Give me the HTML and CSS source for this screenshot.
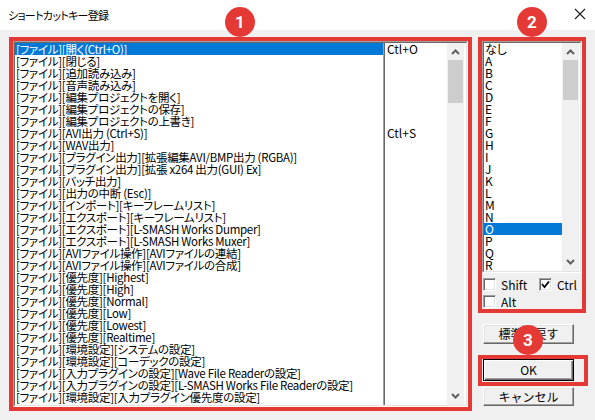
FILE: index.html
```html
<!DOCTYPE html>
<html lang="ja">
<head>
<meta charset="utf-8">
<title>ショートカットキー登録</title>
<link rel="stylesheet" href="styles.css">
</head>
<body>
<div class="window">
  <div class="titlebar">
    <span class="title">ショートカットキー登録</span>
    <svg class="close" width="12" height="12" viewBox="0 0 12 12"><path d="M1 1 L11 11 M11 1 L1 11" stroke="#1a1a1a" stroke-width="1.1" fill="none"/></svg>
  </div>
  <div class="content">
    <div class="box box-main">
      <div class="listbox">
        <div class="listbox-in main-list">
          <div class="col-names">
            <div class="row sel">[ファイル][開く(Ctrl+O)]</div>
            <div class="row">[ファイル][閉じる]</div>
            <div class="row">[ファイル][追加読み込み]</div>
            <div class="row">[ファイル][音声読み込み]</div>
            <div class="row">[ファイル][編集プロジェクトを開く]</div>
            <div class="row">[ファイル][編集プロジェクトの保存]</div>
            <div class="row">[ファイル][編集プロジェクトの上書き]</div>
            <div class="row">[ファイル][AVI出力 (Ctrl+S)]</div>
            <div class="row">[ファイル][WAV出力]</div>
            <div class="row">[ファイル][プラグイン出力][拡張編集AVI/BMP出力 (RGBA)]</div>
            <div class="row">[ファイル][プラグイン出力][拡張 x264 出力(GUI) Ex]</div>
            <div class="row">[ファイル][バッチ出力]</div>
            <div class="row">[ファイル][出力の中断 (Esc)]</div>
            <div class="row">[ファイル][インポート][キーフレームリスト]</div>
            <div class="row">[ファイル][エクスポート][キーフレームリスト]</div>
            <div class="row">[ファイル][エクスポート][L-SMASH Works Dumper]</div>
            <div class="row">[ファイル][エクスポート][L-SMASH Works Muxer]</div>
            <div class="row">[ファイル][AVIファイル操作][AVIファイルの連結]</div>
            <div class="row">[ファイル][AVIファイル操作][AVIファイルの合成]</div>
            <div class="row">[ファイル][優先度][Highest]</div>
            <div class="row">[ファイル][優先度][High]</div>
            <div class="row">[ファイル][優先度][Normal]</div>
            <div class="row">[ファイル][優先度][Low]</div>
            <div class="row">[ファイル][優先度][Lowest]</div>
            <div class="row">[ファイル][優先度][Realtime]</div>
            <div class="row">[ファイル][環境設定][システムの設定]</div>
            <div class="row">[ファイル][環境設定][コーデックの設定]</div>
            <div class="row">[ファイル][入力プラグインの設定][Wave File Readerの設定]</div>
            <div class="row">[ファイル][入力プラグインの設定][L-SMASH Works File Readerの設定]</div>
            <div class="row">[ファイル][環境設定][入力プラグイン優先度の設定]</div>
          </div>
          <div class="col-keys">
            <div class="row">Ctl+O</div>
            <div class="row"></div>
            <div class="row"></div>
            <div class="row"></div>
            <div class="row"></div>
            <div class="row"></div>
            <div class="row"></div>
            <div class="row">Ctl+S</div>
          </div>
          <div class="scrollbar">
            <svg class="arrow" width="9" height="6" viewBox="0 0 9 6"><polyline points="1,5 4.5,1.5 8,5" fill="none" stroke="#606060" stroke-width="2"/></svg>
            <div class="thumb thumb-main"></div>
            <div class="spacer"></div>
            <svg class="arrow" width="9" height="6" viewBox="0 0 9 6"><polyline points="1,1 4.5,4.5 8,1" fill="none" stroke="#606060" stroke-width="2"/></svg>
          </div>
        </div>
      </div>
    </div>

    <div class="side">
      <div class="box box-keys">
        <div class="listbox">
          <div class="listbox-in key-list">
            <div class="col-letters">
              <div class="row">なし</div>
              <div class="row">A</div>
              <div class="row">B</div>
              <div class="row">C</div>
              <div class="row">D</div>
              <div class="row">E</div>
              <div class="row">F</div>
              <div class="row">G</div>
              <div class="row">H</div>
              <div class="row">I</div>
              <div class="row">J</div>
              <div class="row">K</div>
              <div class="row">L</div>
              <div class="row">M</div>
              <div class="row">N</div>
              <div class="row sel">O</div>
              <div class="row">P</div>
              <div class="row">Q</div>
              <div class="row">R</div>
            </div>
            <div class="scrollbar">
              <svg class="arrow" width="9" height="6" viewBox="0 0 9 6"><polyline points="1,5 4.5,1.5 8,5" fill="none" stroke="#606060" stroke-width="2"/></svg>
              <div class="thumb thumb-keys"></div>
              <div class="spacer"></div>
              <svg class="arrow" width="9" height="6" viewBox="0 0 9 6"><polyline points="1,1 4.5,4.5 8,1" fill="none" stroke="#606060" stroke-width="2"/></svg>
            </div>
          </div>
        </div>
        <div class="mods">
          <div class="mod-row">
            <label class="check check-shift"><span class="cbox"></span><span>Shift</span></label>
            <label class="check"><span class="cbox checked"><svg width="9" height="9" viewBox="0 0 9 9"><polyline points="1,4 3.5,7 8,1.5" fill="none" stroke="#000" stroke-width="1.8"/></svg></span><span>Ctrl</span></label>
          </div>
          <div class="mod-row">
            <label class="check"><span class="cbox"></span><span>Alt</span></label>
          </div>
        </div>
      </div>
      <div class="btn btn-reset">標準に戻す</div>
      <div class="box box-ok">
        <div class="btn btn-default">OK</div>
      </div>
      <div class="btn btn-cancel">キャンセル</div>
    </div>
  </div>

  <div class="badge badge-1">1</div>
  <div class="badge badge-2">2</div>
  <div class="badge badge-3">3</div>
</div>
</body>
</html>
```

FILE: styles.css
```css
* { box-sizing: border-box; }
html, body { margin: 0; padding: 0; }
body {
  width: 595px;
  height: 420px;
  overflow: hidden;
  background: #f0f0f0;
  font-family: "Noto Sans CJK JP", "Noto Sans", sans-serif;
  font-size: 12px;
  color: #000;
}
.window {
  position: relative;
  width: 595px;
  height: 420px;
  background: #f0f0f0;
}
.titlebar {
  height: 30px;
  background: #fff;
  display: flex;
  align-items: center;
  justify-content: space-between;
  padding: 0 9px 1px 8px;
}
.title {
  font-size: 11px;
  letter-spacing: -0.7px;
  font-feature-settings: "palt";
  color: #000;
}
.close { display: block; margin-top: -2px; }

.content {
  display: flex;
  padding: 7px 0 0 9px;
  gap: 6px;
}
.box {
  border: 4px solid #e53935;
}
.box-main {
  width: 463px;
  height: 374px;
}
.listbox {
  border: 1px solid;
  border-color: #a0a0a0 #ffffff #ffffff #a0a0a0;
  background: #fff;
}
.listbox-in {
  border: 1px solid;
  border-color: #696969 #e3e3e3 #e3e3e3 #696969;
  display: flex;
  background: #fff;
  overflow: hidden;
}
.box-main .listbox { height: 366px; }
.main-list { height: 364px; }

.row {
  height: 12px;
  line-height: 12px;
  white-space: nowrap;
  font-size: 11.5px;
  letter-spacing: -0.3px;
  font-feature-settings: "palt";
  padding-left: 1px;
}
.row.sel {
  background: #0078d7;
  color: #fff;
}
.col-names {
  width: 368px;
  flex: none;
  position: relative;
  z-index: 1;
}
.col-keys {
  width: 64px;
  flex: none;
  border-left: 1px solid #a0a0a0;
  box-shadow: inset 1px 0 0 #696969;
  padding-left: 2px;
  background: #fff;
  position: relative;
  z-index: 2;
}
.col-keys .row { letter-spacing: 0; font-size: 12px; }
.scrollbar {
  width: 17px;
  flex: none;
  background: #f0f0f0;
  display: flex;
  flex-direction: column;
  align-items: center;
  position: relative;
  z-index: 2;
}
.scrollbar .arrow {
  display: block;
  margin: 6px 0 5px;
}
.scrollbar .arrow:last-child { margin: 5px 0 6px; }
.thumb {
  width: 15px;
  background: #cdcdcd;
  flex: none;
}
.thumb-main { height: 43px; }
.thumb-keys { height: 40px; }
.spacer { flex: 1; }

.side {
  display: flex;
  flex-direction: column;
  width: 110px;
}
.box-keys {
  width: 108px;
  height: 276px;
}
.box-keys .listbox { width: 100px; height: 232px; }
.key-list { height: 230px; }
.col-letters { width: 78px; flex: none; }
.col-letters .row { font-size: 12px; letter-spacing: 0; }

.mods {
  padding: 5px 0 0 1px;
}
.mod-row {
  display: flex;
  height: 13px;
  margin-bottom: 4px;
}
.check {
  display: flex;
  align-items: center;
  gap: 5px;
  font-size: 12px;
  line-height: 13px;
}
.check-shift { width: 56px; }
.cbox {
  width: 13px;
  height: 13px;
  background: #fff;
  border: 1px solid;
  border-color: #a0a0a0 #fff #fff #a0a0a0;
  box-shadow: inset 1px 1px 0 #696969, inset -1px -1px 0 #e3e3e3;
  display: flex;
  align-items: center;
  justify-content: center;
  flex: none;
}
.cbox svg { display: block; }

.btn {
  width: 91px;
  height: 20px;
  margin-left: 5px;
  background: #f0f0f0;
  border: 1px solid;
  border-color: #fff #696969 #696969 #fff;
  box-shadow: inset -1px -1px 0 #a0a0a0, inset 1px 1px 0 #e3e3e3;
  display: flex;
  align-items: center;
  justify-content: center;
  font-size: 12px;
  line-height: 12px;
}
.btn-reset { margin-top: 11px; }
.box-ok {
  width: 110px;
  height: 31px;
  margin-top: 11px;
  padding: 0;
}
.btn-default {
  margin: 0 0 0 1px;
  height: 22px;
  border: 1px solid #000;
  box-shadow: inset 1px 1px 0 #fff, inset -1px -1px 0 #696969, inset -2px -2px 0 #a0a0a0;
}
.btn-cancel {
  margin-top: 1px;
  height: 19px;
}

.badge {
  position: absolute;
  width: 30px;
  height: 30px;
  border-radius: 50%;
  background: #e53935;
  color: #fff;
  font-family: "Roboto", "Liberation Sans", sans-serif;
  font-weight: bold;
  font-size: 17px;
  line-height: 30px;
  text-align: center;
  z-index: 5;
}
.badge-1 { left: 225px; top: 7px; }
.badge-2 { left: 517px; top: 7px; }
.badge-3 { left: 513px; top: 325px; }
```
